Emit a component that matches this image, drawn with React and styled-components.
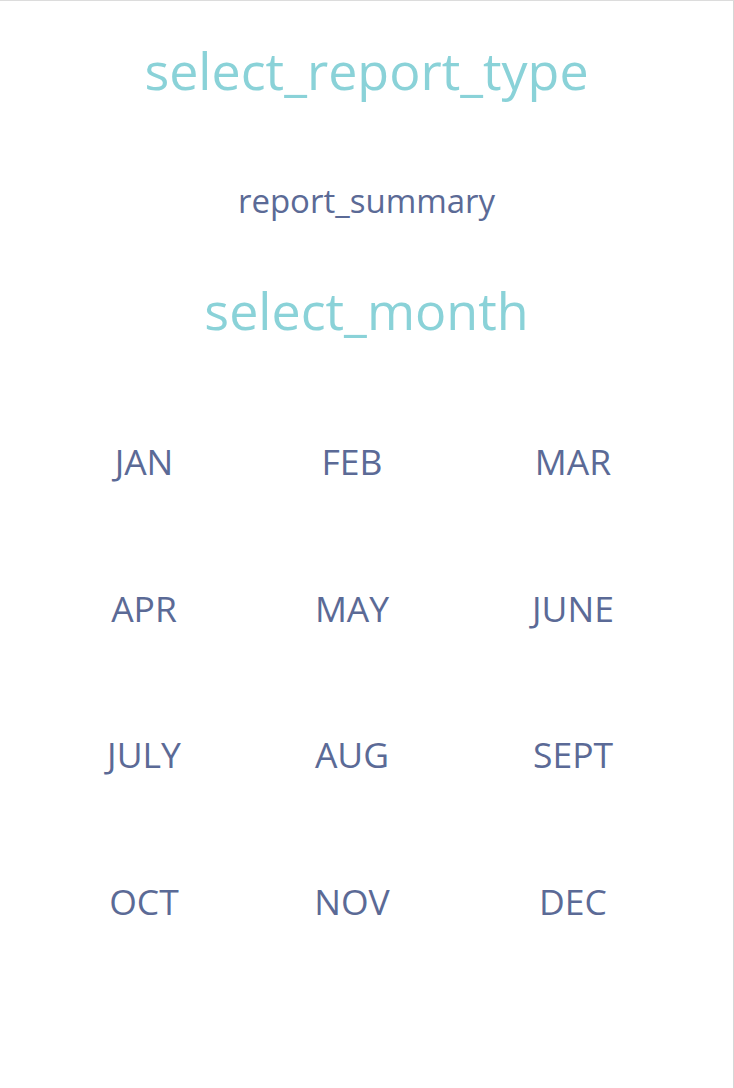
import React from "react";
import styled, { createGlobalStyle } from "styled-components";

const Global = createGlobalStyle`
  html, body { margin: 0; padding: 0; background: #ffffff; }
  body { font-family: "Open Sans", "Noto Sans", sans-serif; }
`;

const Page = styled.div`
  box-sizing: border-box;
  width: 734px;
  height: 1088px;
  border-top: 1px solid #dcdcdc;
  border-right: 1px solid #d6d6d6;
  background: #fff;
  display: flex;
  flex-direction: column;
  align-items: stretch;
`;

const Title = styled.h2`
  margin: 0;
  font-weight: 400;
  font-size: 52px;
  color: #8ad2d8;
  text-align: center;
  line-height: 1;
  padding-top: ${(p) => p.$top}px;
`;

const Summary = styled.div`
  font-size: 33px;
  color: #5b6a96;
  text-align: center;
  line-height: 1;
  padding-top: 88px;
`;

const Grid = styled.div`
  display: grid;
  grid-template-columns: 208px 208px 234px;
  grid-auto-rows: 146.5px;
  padding-left: 40px;
  margin-top: 52px;
`;

const Month = styled.button`
  border: none;
  background: transparent;
  font-family: inherit;
  font-size: 35.5px;
  color: #5b6a96;
  display: flex;
  align-items: center;
  justify-content: center;
  padding: 0;
  cursor: pointer;
`;

const months = ["JAN","FEB","MAR","APR","MAY","JUNE","JULY","AUG","SEPT","OCT","NOV","DEC"];

export default function App() {
  return (
    <>
      <Global />
      <Page>
        <Title $top={43}>select_report_type</Title>
        <Summary>report_summary</Summary>
        <Title $top={67}>select_month</Title>
        <Grid>
          {months.map((m) => (
            <Month key={m}>{m}</Month>
          ))}
        </Grid>
      </Page>
    </>
  );
}
